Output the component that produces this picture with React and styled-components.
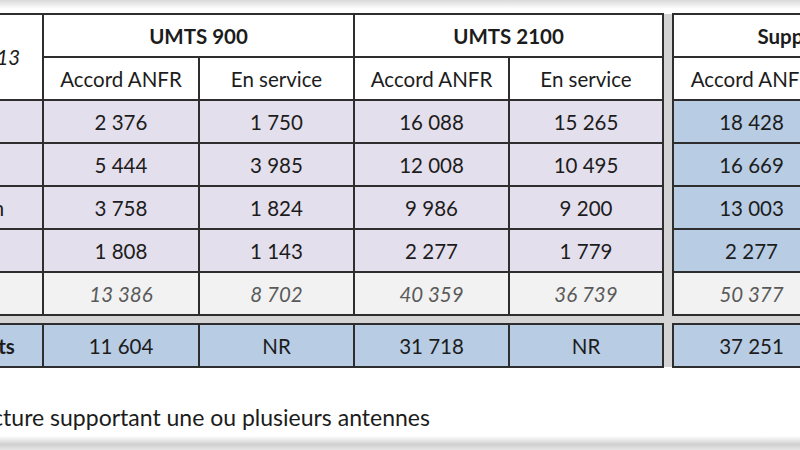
import styled, { createGlobalStyle } from "styled-components";

const GlobalStyle = createGlobalStyle`
  body {
    margin: 0;
    background: #fff;
  }
`;

const tones = {
  white: "#ffffff",
  lilac: "#e4dfec",
  grey: "#f2f2f2",
  blue: "#b8cce4",
};

const Frame = styled.div`
  width: 800px;
  height: 450px;
  overflow: hidden;
  background:
    linear-gradient(#d9d9d9, rgba(255, 255, 255, 0)) top / 100% 9px no-repeat,
    linear-gradient(rgba(255, 255, 255, 0), #cfcfcf 60%, #e6e6e6) bottom / 100% 14px no-repeat,
    #fff;
  font-family: Lato, "Open Sans", sans-serif;
  color: #1c1c1c;
`;

const Sheet = styled.div`
  padding-top: 13px;
  margin-left: -176px;
`;

const Grid = styled.table`
  border-collapse: collapse;
  table-layout: fixed;
  width: 1162px;
  font-size: 20.5px;
`;

const Row = styled.tr`
  height: 43px;
`;

const Cell = styled.td`
  border: 2px solid #2e2e2e;
  padding: 0 6px;
  background: ${(p) => tones[p.$tone || "white"]};
  text-align: center;
  font-style: ${(p) => (p.$italic ? "italic" : "normal")};
  font-weight: ${(p) => (p.$bold ? 700 : 400)};
  color: ${(p) => (p.$muted ? "#5a5a5a" : "#1c1c1c")};
  white-space: nowrap;
  overflow: hidden;
`;

const Label = styled(Cell)`
  text-align: left;
  padding-right: 0;
  text-indent: ${(p) => p.$shift || 0}px;
`;

const Gap = styled.td`
  background: #d4d4d4;
  border: 2px solid #2e2e2e;
  border-top-style: hidden;
  border-bottom-style: hidden;
  padding: 0;
`;

const GapRow = styled.tr`
  height: 9px;

  td {
    background: #d4d4d4;
    border: none;
    padding: 0;
  }
`;

const Footnote = styled.p`
  margin: 36px 0 0;
  padding-left: 15px;
  font-size: 23px;
  line-height: 26px;
  white-space: nowrap;
`;

const operators = [
  { name: "Orange", values: ["2 376", "1 750", "16 088", "15 265", "18 428", "16 102"] },
  { name: "SFR", values: ["5 444", "3 985", "12 008", "10 495", "16 669", "14 204"] },
  { name: "Bouygues Telecom", shift: 5, values: ["3 758", "1 824", "9 986", "9 200", "13 003", "11 024"] },
  { name: "Free", values: ["1 808", "1 143", "2 277", "1 779", "2 277", "1 779"] },
];

const totals = ["13 386", "8 702", "40 359", "36 739", "50 377", "43 109"];
const supports = ["11 604", "NR", "31 718", "NR", "37 251", "NR"];

export default function App() {
  return (
    <Frame>
      <GlobalStyle />
      <Sheet>
        <Grid>
          <colgroup>
            <col style={{ width: 218 }} />
            <col style={{ width: 156 }} />
            <col style={{ width: 155 }} />
            <col style={{ width: 155 }} />
            <col style={{ width: 154 }} />
            <col style={{ width: 10 }} />
            <col style={{ width: 157 }} />
            <col style={{ width: 157 }} />
          </colgroup>
          <tbody>
            <Row>
              <Label rowSpan={2} $italic $shift={-4}>
                Au 31 décembre 2013
              </Label>
              <Cell colSpan={2} $bold>UMTS 900</Cell>
              <Cell colSpan={2} $bold>UMTS 2100</Cell>
              <Gap rowSpan={7} />
              <Cell colSpan={2} $bold>Supports UMTS</Cell>
            </Row>
            <Row>
              <Cell>Accord ANFR</Cell>
              <Cell>En service</Cell>
              <Cell>Accord ANFR</Cell>
              <Cell>En service</Cell>
              <Cell>Accord ANFR</Cell>
              <Cell>En service</Cell>
            </Row>
            {operators.map((op) => (
              <Row key={op.name}>
                <Label $tone="lilac" $shift={op.shift}>{op.name}</Label>
                {op.values.map((v, i) => (
                  <Cell key={i} $tone={i >= 4 ? "blue" : "lilac"}>{v}</Cell>
                ))}
              </Row>
            ))}
            <Row>
              <Label $tone="grey" $italic $muted>Total</Label>
              {totals.map((v, i) => (
                <Cell key={i} $tone="grey" $italic $muted>{v}</Cell>
              ))}
            </Row>
            <GapRow>
              <td colSpan={8} />
            </GapRow>
            <Row>
              <Label $tone="blue" $bold $shift={-4}>Nombre de supports</Label>
              {supports.slice(0, 4).map((v, i) => (
                <Cell key={i} $tone="blue">{v}</Cell>
              ))}
              <Gap />
              {supports.slice(4).map((v, i) => (
                <Cell key={i + 4} $tone="blue">{v}</Cell>
              ))}
            </Row>
          </tbody>
        </Grid>
        <Footnote>* Support : structure supportant une ou plusieurs antennes</Footnote>
      </Sheet>
    </Frame>
  );
}
